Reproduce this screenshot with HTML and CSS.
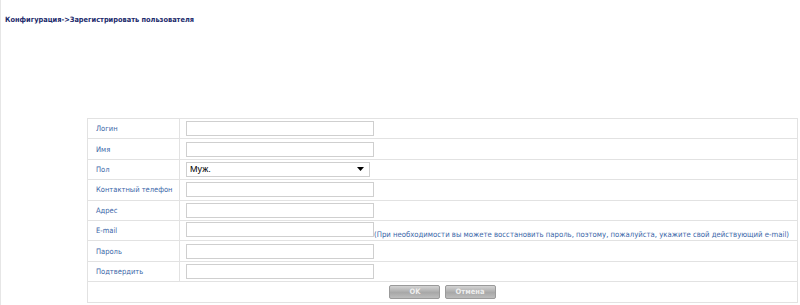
FILE: index.html
```html
<!DOCTYPE html>
<html lang="ru">
<head>
  <meta charset="UTF-8">
  <title>Зарегистрировать пользователя</title>
  <link rel="stylesheet" href="styles.css">
</head>
<body>
  <div class="page">
    <h1 class="crumb">Конфигурация-&gt;Зарегистрировать пользователя</h1>

    <table class="reg-form">
      <colgroup>
        <col class="col-label">
        <col>
      </colgroup>
      <tr>
        <td class="label">Логин</td>
        <td><input type="text" class="field"></td>
      </tr>
      <tr>
        <td class="label">Имя</td>
        <td><input type="text" class="field"></td>
      </tr>
      <tr>
        <td class="label">Пол</td>
        <td>
          <div class="select">
            <span>Муж.</span>
            <svg width="7" height="4" viewBox="0 0 7 4"><path d="M0 0h7L3.5 4z" fill="#000"/></svg>
          </div>
        </td>
      </tr>
      <tr>
        <td class="label">Контактный телефон</td>
        <td><input type="text" class="field"></td>
      </tr>
      <tr>
        <td class="label">Адрес</td>
        <td><input type="text" class="field"></td>
      </tr>
      <tr>
        <td class="label">E-mail</td>
        <td class="with-hint"><input type="text" class="field"><span class="hint">(При необходимости вы можете восстановить пароль, поэтому, пожалуйста, укажите свой действующий e-mail)</span></td>
      </tr>
      <tr>
        <td class="label">Пароль</td>
        <td><input type="password" class="field"></td>
      </tr>
      <tr>
        <td class="label">Подтвердить</td>
        <td><input type="password" class="field"></td>
      </tr>
      <tr>
        <td colspan="2" class="buttons">
          <button class="btn">OK</button>
          <button class="btn">Отмена</button>
        </td>
      </tr>
    </table>
  </div>
</body>
</html>
```

FILE: styles.css
```css
* {
  margin: 0;
  padding: 0;
  box-sizing: border-box;
}

body {
  font-family: 'DejaVu Sans Condensed', 'Liberation Sans', sans-serif;
  background-color: #fff;
  color: #3a66a8;
}

.page {
  height: 305px;
  border-left: 1px solid #e6e6e6;
  padding: 14px 0 0 4px;
}

.crumb {
  font-size: 7.35px;
  font-weight: bold;
  color: #1b2a6b;
  line-height: 11px;
}

/* Form table */
.reg-form {
  margin: 93px 0 0 82px;
  width: 711px;
  table-layout: fixed;
  border-collapse: collapse;
  border: 1px solid #e2e2e2;
}

.col-label {
  width: 92px;
}

.reg-form td {
  height: 20.4px;
  border-bottom: 1px solid #e2e2e2;
  font-size: 7.5px;
  vertical-align: middle;
  padding: 0 0 0 6px;
  white-space: nowrap;
}

.reg-form td.label {
  border-right: 1px solid #e2e2e2;
  padding-left: 8px;
  color: #3a66a8;
}

.field {
  display: block;
  width: 188px;
  height: 15px;
  border: 1px solid #cfcfcf;
  background: #fff;
  outline: none;
}

.with-hint .field {
  display: inline-block;
  vertical-align: middle;
}

.hint {
  font-size: 7.7px;
  vertical-align: -5px;
  color: #3a66a8;
}

.select {
  display: flex;
  justify-content: space-between;
  align-items: center;
  width: 184px;
  height: 15px;
  border: 1px solid #cfcfcf;
  padding: 0 5px 0 3px;
  font-family: 'Liberation Sans', sans-serif;
  font-size: 9px;
  color: #000;
}

.buttons {
  text-align: center;
  padding: 0 !important;
}

.btn {
  width: 51px;
  height: 14px;
  margin: 0 1px;
  font-family: 'DejaVu Sans Condensed', 'Liberation Sans', sans-serif;
  font-size: 7.5px;
  font-weight: bold;
  color: #eeeeee;
  border: 1px solid #9a9a9a;
  border-radius: 2px;
  background: linear-gradient(#d4d4d4, #a8a8a8 55%, #bdbdbd);
}
```
